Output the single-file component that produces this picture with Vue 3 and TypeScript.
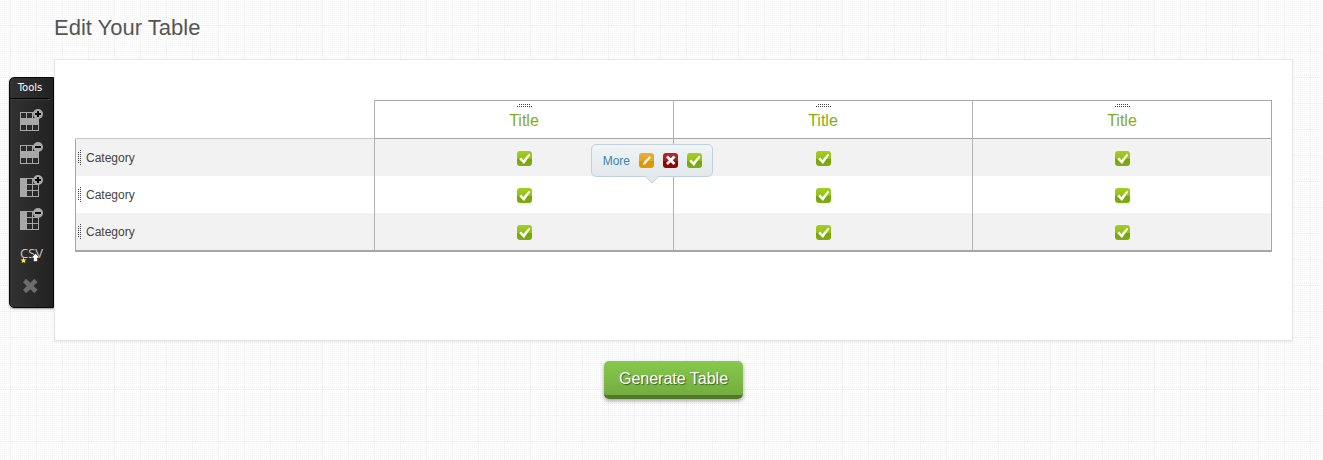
<script setup lang="ts">
import { ref } from 'vue'

type GridTool = { label: string; kind: 'row' | 'column'; add: boolean }

const gridTools: GridTool[] = [
  { label: 'Add row', kind: 'row', add: true },
  { label: 'Remove row', kind: 'row', add: false },
  { label: 'Add column', kind: 'column', add: true },
  { label: 'Remove column', kind: 'column', add: false },
]

const columns = ref<string[]>(['Title', 'Title', 'Title'])
const rows = ref<string[]>(['Category', 'Category', 'Category'])

const rowHoles = [[1, 1], [7, 1], [13, 1], [1, 13], [7, 13], [13, 13]]
const columnHoles = [[7, 1], [13, 1], [7, 7], [13, 7], [7, 13], [13, 13]]
</script>

<template>
  <div class="page">
    <svg class="defs" aria-hidden="true">
      <defs>
        <linearGradient id="green" x1="0" y1="0" x2="0" y2="1">
          <stop offset="0" stop-color="#a3ce22" />
          <stop offset="0.5" stop-color="#94c01a" />
          <stop offset="0.55" stop-color="#76a40c" />
          <stop offset="1" stop-color="#7fae10" />
        </linearGradient>
        <linearGradient id="amber" x1="0" y1="0" x2="0" y2="1">
          <stop offset="0" stop-color="#e8ae3a" />
          <stop offset="0.5" stop-color="#e3a52c" />
          <stop offset="0.55" stop-color="#d99504" />
          <stop offset="1" stop-color="#dc9a08" />
        </linearGradient>
        <linearGradient id="red" x1="0" y1="0" x2="0" y2="1">
          <stop offset="0" stop-color="#b02a2a" />
          <stop offset="0.5" stop-color="#a62020" />
          <stop offset="0.55" stop-color="#8c0202" />
          <stop offset="1" stop-color="#920606" />
        </linearGradient>
        <symbol id="check" viewBox="0 0 15 15">
          <rect width="15" height="15" rx="3" fill="url(#green)" />
          <path d="M2.200 8.300L4.300 6.600L6.300 9L12 2.800L13.300 4L7 12.900Z" fill="#fff" />
        </symbol>
      </defs>
    </svg>

    <h1>Edit Your Table</h1>

    <div class="workspace">
      <aside class="tools" aria-label="Tools">
        <h2>Tools</h2>
        <button v-for="tool in gridTools" :key="tool.label" type="button" :aria-label="tool.label">
          <svg width="24" height="24" viewBox="0 0 24 24">
            <rect x="0" y="3" width="19" height="19" fill="#a8a8a8" />
            <rect
              v-for="([x, y], i) in tool.kind === 'row' ? rowHoles : columnHoles"
              :key="i"
              :x="x"
              :y="y + 3"
              width="5"
              height="5"
              fill="#292929"
            />
            <circle cx="18" cy="5" r="5" fill="#a8a8a8" />
            <path :d="tool.add ? 'M15 4h2v-2h2v2h2v2h-2v2h-2v-2h-2z' : 'M15 4h6v2h-6z'" fill="#080808" />
          </svg>
        </button>
        <button type="button" class="csv">
          <span>CSV</span>
          <svg width="24" height="24" viewBox="0 0 24 24" aria-hidden="true">
            <path d="M3.500 16.500l.9 1.900 2.100.2-1.600 1.400.5 2.100-1.900-1.100-1.900 1.100.5-2.100L.5 18.600l2.100-.2z" fill="#f5ee30" />
            <path d="M15.500 12.500l3.500 3.500v1h-1.500v3.500h-4V17H12v-1z" fill="#fff" stroke="#222" stroke-width=".6" />
          </svg>
        </button>
        <button type="button" aria-label="Clear">
          <svg width="24" height="24" viewBox="0 0 24 24">
            <path d="M4.500 6.500l11.500 11M16 6.500l-11.500 11" stroke="#6c6c6c" stroke-width="4.500" />
          </svg>
        </button>
      </aside>

      <main class="panel">
        <table>
          <thead>
            <tr>
              <td class="corner"></td>
              <th v-for="(title, i) in columns" :key="i" scope="col">
                <span class="grip grip-h"></span>
                <span class="title">{{ title }}</span>
              </th>
            </tr>
          </thead>
          <tbody>
            <tr v-for="(row, r) in rows" :key="r">
              <th scope="row">
                <span class="label"><span class="grip grip-v"></span>{{ row }}</span>
              </th>
              <td v-for="(title, c) in columns" :key="c" :class="{ host: r === 0 && c === 0 }">
                <button type="button" class="icon" aria-label="Included">
                  <svg width="15" height="15"><use href="#check" /></svg>
                </button>
                <div v-if="r === 0 && c === 0" class="popover">
                  <a href="#more">More</a>
                  <button type="button" class="icon" aria-label="Edit">
                    <svg width="15" height="15" viewBox="0 0 15 15">
                      <rect width="15" height="15" rx="3" fill="url(#amber)" />
                      <path d="M4 12l.6-2.600 5.900-6.200 1.500 1.400-5.700 6.300z" fill="#fff" />
                    </svg>
                  </button>
                  <button type="button" class="icon" aria-label="Delete">
                    <svg width="15" height="15" viewBox="0 0 15 15">
                      <rect width="15" height="15" rx="3" fill="url(#red)" />
                      <path d="M4 3.500l7.500 7.500M11.500 3.500l-7.500 7.500" stroke="#fff" stroke-width="2.800" />
                    </svg>
                  </button>
                  <button type="button" class="icon" aria-label="Set check mark">
                    <svg width="15" height="15"><use href="#check" /></svg>
                  </button>
                  <svg class="pointer" width="14" height="7" viewBox="0 0 14 7" aria-hidden="true">
                    <path d="M0 0h14l-7 7z" fill="#e2e8eb" />
                    <path d="M0 0l7 7 7-7" fill="none" stroke="#c5d5dc" />
                  </svg>
                </div>
              </td>
            </tr>
          </tbody>
        </table>
      </main>
    </div>

    <div class="actions">
      <button type="button" class="generate">Generate Table</button>
    </div>
  </div>
</template>

<style>
body {
  margin: 0;
  background-color: #fff;
}
</style>

<style scoped>
.page {
  min-height: 100vh;
  box-sizing: border-box;
  padding: 15px 30px 20px 9px;
  font-family: "Liberation Sans", Arial, sans-serif;
  font-size: 12px;
  color: #444;
  background-color: #fefefe;
  background-image:
    linear-gradient(#f2f2f2 1px, transparent 1px),
    linear-gradient(90deg, #f2f2f2 1px, transparent 1px),
    linear-gradient(90deg, transparent 1px, #fefefe 1px),
    linear-gradient(#f3f3f3 1px, #fefefe 1px);
  background-size: 26px 26px, 26px 26px, 2px 2px, 2px 2px;
  background-position: 0 25px, 10px 0, 0 0, 0 1px;
}
.defs {
  position: absolute;
  width: 0;
  height: 0;
}
button {
  padding: 0;
  border: 0;
  background: none;
  font: inherit;
  color: inherit;
  cursor: pointer;
}
svg {
  display: block;
}
h1 {
  margin: 0 0 18px 45px;
  font-size: 22px;
  line-height: 26px;
  font-weight: 400;
  color: #555;
}
.workspace {
  display: flex;
  align-items: flex-start;
}
.tools {
  display: flex;
  flex-direction: column;
  flex: 0 0 45px;
  box-sizing: border-box;
  margin-top: 18px;
  padding-bottom: 5px;
  border: 1px solid #080808;
  border-radius: 5px 0 0 5px;
  background: linear-gradient(90deg, #323232, #222);
  box-shadow: 0 1px 2px rgba(0, 0, 0, 0.4);
}
.tools h2 {
  margin: 0 3px 5px 0;
  border-bottom: 1px solid #000;
  box-shadow: 0 1px 0 #3c3c3c;
  font: 10px/20px "DejaVu Sans", Verdana, sans-serif;
  text-align: center;
  color: #fff;
}
.tools button {
  display: flex;
  align-items: center;
  height: 33px;
  padding-left: 10px;
}
.tools .csv {
  display: grid;
  align-content: center;
  justify-content: start;
}
.csv span,
.csv svg {
  grid-area: 1 / 1;
}
.csv span {
  font: 13px/16px "Open Sans", sans-serif;
  text-align: left;
  color: #c8c8c8;
}
.panel {
  flex: 1;
  min-width: 0;
  padding: 40px 20px 88px;
  border: 1px solid #e6e6e6;
  background: #fff;
  box-shadow: 0 1px 2px rgba(0, 0, 0, 0.08);
}
table {
  width: 100%;
  table-layout: fixed;
  border-collapse: separate;
  border-spacing: 0;
  border: solid #a6a6a6;
  border-width: 0 1px 2px 0;
}
th,
td {
  padding: 0;
  font-weight: 400;
  text-align: center;
  border-left: 1px solid #b4b4b4;
}
thead th {
  border-top: 1px solid #a6a6a6;
  border-bottom: 1px solid #a6a6a6;
}
thead .corner {
  border-left-color: transparent;
  border-bottom: 1px solid #c8c8c8;
}
tbody td {
  padding-top: 2px;
}
.title {
  display: block;
  padding: 3px 0 6px;
  font-size: 16px;
  line-height: 22px;
  color: #83ad12;
}
.grip {
  display: block;
}
.grip-h {
  width: 15px;
  height: 3px;
  margin: 3px auto 0;
  background-image:
    repeating-linear-gradient(90deg, #444 0 1px, transparent 1px 2px),
    repeating-linear-gradient(90deg, #444 0 1px, transparent 1px 2px);
  background-size: 12px 1px, 15px 1px;
  background-position: 2px 0, 0 2px;
  background-repeat: no-repeat;
}
.grip-v {
  width: 3px;
  height: 15px;
  background-image:
    repeating-linear-gradient(#444 0 1px, transparent 1px 2px),
    repeating-linear-gradient(#444 0 1px, transparent 1px 2px);
  background-size: 1px 12px, 1px 15px;
  background-position: 0 2px, 2px 0;
  background-repeat: no-repeat;
}
.label {
  display: flex;
  align-items: center;
  gap: 5px;
  height: 37px;
  padding-left: 2px;
}
tbody th {
  border-left-color: #a6a6a6;
}
tbody tr:nth-child(odd) {
  background: #f2f2f2;
}
.icon {
  display: inline-block;
  vertical-align: middle;
}
.host {
  position: relative;
}
.popover {
  position: absolute;
  z-index: 1;
  top: 5px;
  right: -40px;
  display: flex;
  align-items: center;
  gap: 9px;
  box-sizing: border-box;
  height: 33px;
  padding: 0 10px 0 11px;
  border: 1px solid #c0d3da;
  border-radius: 5px;
  background: linear-gradient(#f0f4f6, #e2e8eb);
}
.popover a {
  color: #3c87b0;
  text-decoration: none;
}
.pointer {
  position: absolute;
  top: 100%;
  left: 50%;
  margin-left: -7px;
}
.actions {
  display: flex;
  justify-content: center;
  margin: 20px 0 0 45px;
}
.generate {
  padding: 1px 15px 0;
  border-bottom: 4px solid #50782b;
  border-radius: 5px;
  background: linear-gradient(#86c94c, #74ad40);
  box-shadow: 0 2px 4px rgba(0, 0, 0, 0.35);
  font-size: 16px;
  line-height: 33px;
  color: #fff;
  text-shadow: 1px 1px 1px rgba(0, 0, 0, 0.5);
}
</style>
